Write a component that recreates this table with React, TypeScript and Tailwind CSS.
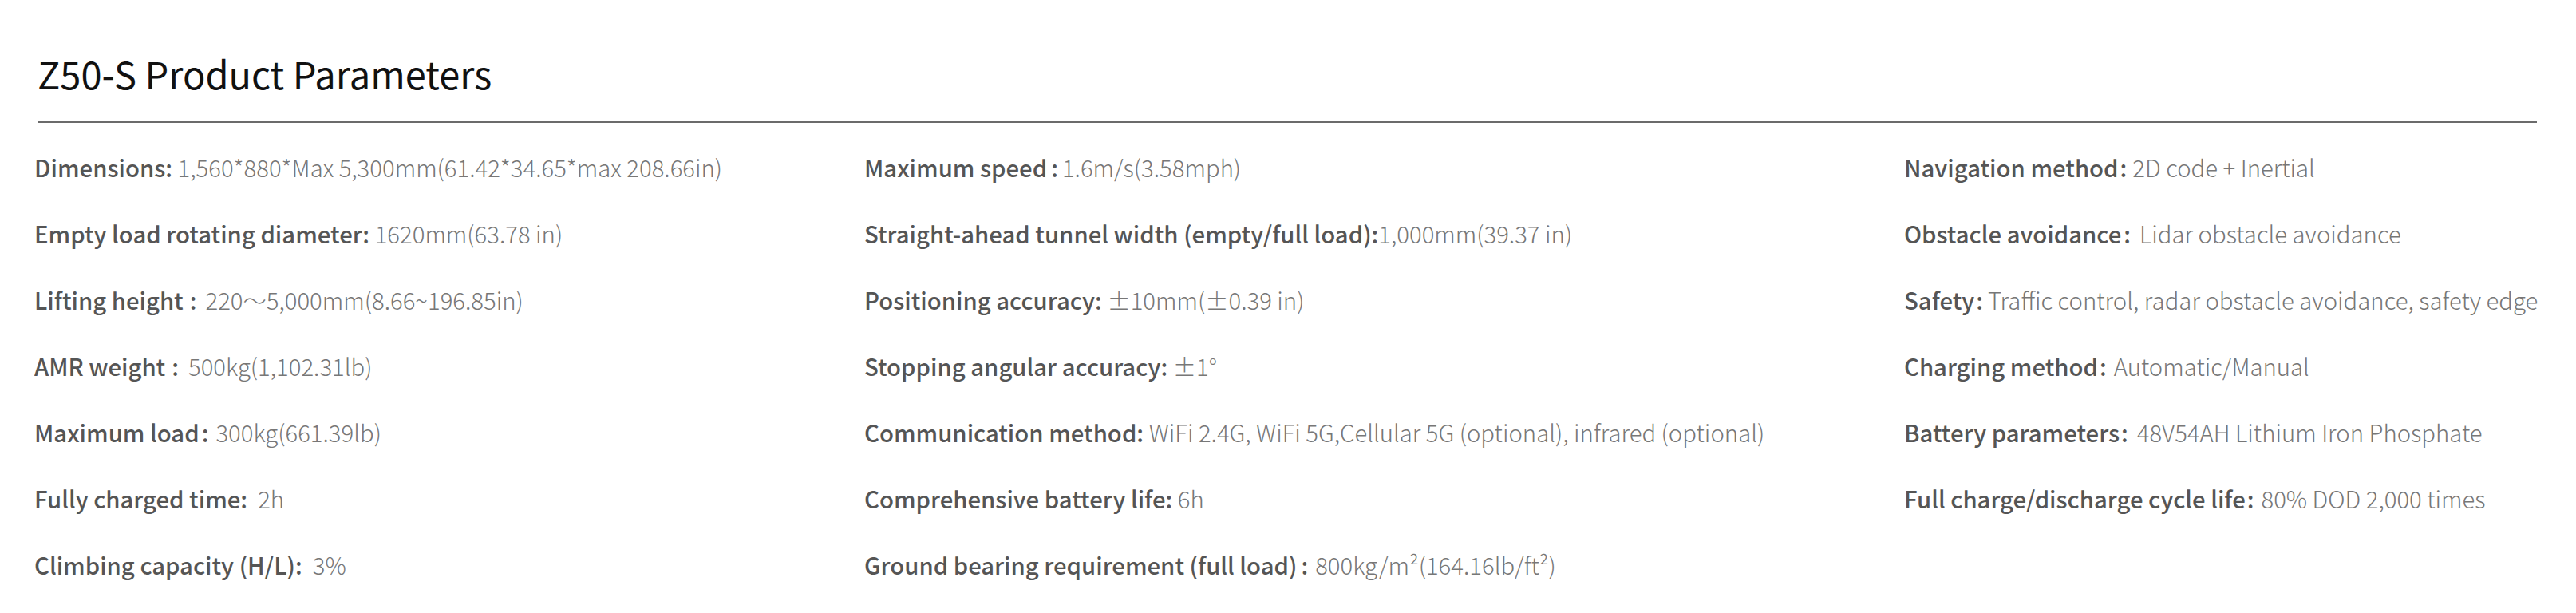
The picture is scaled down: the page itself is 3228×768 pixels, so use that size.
import React from 'react';

// sep: class for the colon when the source used a wide colon
type Param = { label: string; value: string; sep?: string };

const columns: Param[][] = [
  [
    { label: 'Dimensions: ', value: '1,560*880*Max 5,300mm(61.42*34.65*max 208.66in)' },
    { label: 'Empty load rotating diameter: ', value: '1620mm(63.78 in)' },
    { label: 'Lifting height', sep: 'ml-[8px] mr-[11px]', value: '220～5,000mm(8.66~196.85in)' },
    { label: 'AMR weight', sep: 'ml-[8px] mr-[12px]', value: '500kg(1,102.31lb)' },
    { label: 'Maximum load', sep: 'ml-[3px] mr-[9px]', value: '300kg(661.39lb)' },
    { label: 'Fully charged time: ', value: ' 2h' },
    { label: 'Climbing capacity (H/L): ', value: ' 3%' },
  ],
  [
    { label: 'Maximum speed', sep: 'ml-[5px] mr-[5px]', value: '1.6m/s(3.58mph)' },
    { label: 'Straight-ahead tunnel width (empty/full load):', value: '1,000mm(39.37 in)' },
    { label: 'Positioning accuracy: ', value: '±10mm(±0.39 in)' },
    { label: 'Stopping angular accuracy: ', value: '±1°' },
    { label: 'Communication method: ', value: 'WiFi 2.4G, WiFi 5G,Cellular 5G (optional), infrared (optional)' },
    { label: 'Comprehensive battery life: ', value: '6h' },
    { label: 'Ground bearing requirement (full load)', sep: 'ml-[5px] mr-[9px]', value: '800kg/m²(164.16lb/ft²)' },
  ],
  [
    { label: 'Navigation method', sep: 'ml-[2px] mr-[7px]', value: '2D code + Inertial' },
    { label: 'Obstacle avoidance', sep: 'ml-[3px] mr-[11px]', value: 'Lidar obstacle avoidance' },
    { label: 'Safety', sep: 'ml-[2px] mr-[6px]', value: 'Traffic control, radar obstacle avoidance, safety edge' },
    { label: 'Charging method', sep: 'ml-[2px] mr-[9px]', value: 'Automatic/Manual' },
    { label: 'Battery parameters', sep: 'ml-[2px] mr-[11px]', value: '48V54AH Lithium Iron Phosphate' },
    { label: 'Full charge/discharge cycle life', sep: 'ml-[2px] mr-[9px]', value: '80% DOD 2,000 times' },
  ],
];

const App: React.FC = () => {
  return (
    <div className="w-[3228px] h-[768px] bg-white font-['Noto_Sans_CJK_SC','Noto_Sans',sans-serif]">
      <div className="pl-[47px] pr-[49px] pt-[60px]">
        <h2 className="text-[47px] leading-[64px] text-[#111] font-normal">Z50-S Product Parameters</h2>
        <div className="mt-[28px] h-[2px] bg-[#6b6b6b]"></div>
      </div>

      <div className="grid grid-cols-[1040px_1303px_1fr] pl-[43px] pt-[14px]">
        {columns.map((col, ci) => (
          <div key={ci} className="flex flex-col">
            {col.map((p, i) => (
              <div key={i} className="h-[83px] leading-[83px] text-[29.3px] whitespace-pre">
                <span className="font-medium text-[#555]">
                  {p.label}
                  {p.sep && <span className={p.sep}>:</span>}
                </span>
                <span className="font-light text-[#777]">{p.value}</span>
              </div>
            ))}
          </div>
        ))}
      </div>
    </div>
  );
};

export default App;
